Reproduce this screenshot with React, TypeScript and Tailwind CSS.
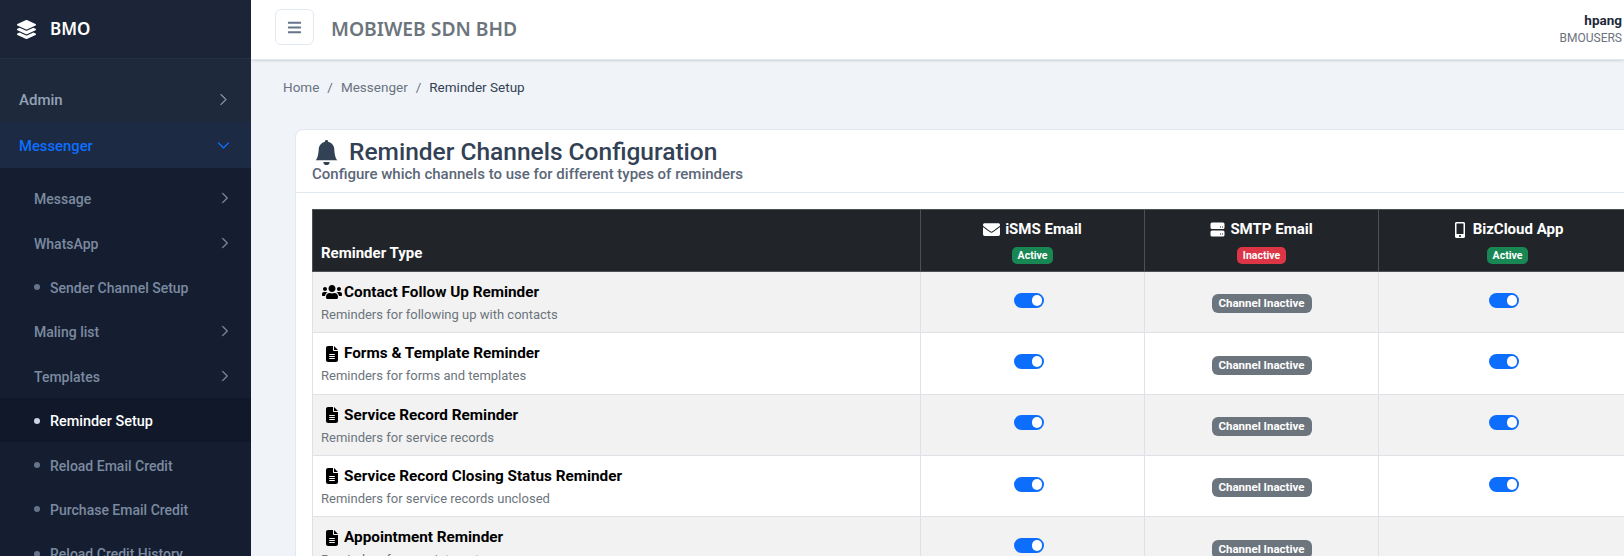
import { BsBellFill, BsChevronRight, BsChevronDown } from "react-icons/bs";
import { FaLayerGroup, FaBars, FaUsers, FaEnvelope, FaMobileAlt } from "react-icons/fa";
import { FaFileLines } from "react-icons/fa6";
import type { ReactNode } from "react";

const subItems = [
    { label: "Message", arrow: true },
    { label: "WhatsApp", arrow: true },
    { label: "Sender Channel Setup" },
    { label: "Maling list", arrow: true },
    { label: "Templates", arrow: true },
    { label: "Reminder Setup", active: true },
    { label: "Reload Email Credit" },
    { label: "Purchase Email Credit" },
    { label: "Reload Credit History" },
];

const rows = [
    { title: "Contact Follow Up Reminder", desc: "Reminders for following up with contacts", people: true, app: true },
    { title: "Forms & Template Reminder", desc: "Reminders for forms and templates", app: true },
    { title: "Service Record Reminder", desc: "Reminders for service records", app: true },
    { title: "Service Record Closing Status Reminder", desc: "Reminders for service records unclosed", app: true },
    { title: "Appointment Reminder", desc: "Reminders for appointments", app: false },
];

function ServerIcon() {
    return (
        <svg viewBox="0 0 15 15" className="w-[15px] h-[15px]" fill="currentColor">
            <path fillRule="evenodd" d="M2 0.5h11a1.5 1.5 0 0 1 1.5 1.5v3.5a1.5 1.5 0 0 1-1.5 1.5H2A1.5 1.5 0 0 1 .5 5.500V2A1.500 1.500 0 0 1 2 .5zM10 4.500v1h1v-1zM12 4.500v1h1v-1z" />
            <path fillRule="evenodd" d="M2 8.500h11a1.500 1.500 0 0 1 1.500 1.500v3a1.500 1.500 0 0 1-1.500 1.500H2A1.500 1.500 0 0 1 .5 13v-3A1.500 1.500 0 0 1 2 8.500zM10 11.500v1h1v-1zM12 11.500v1h1v-1z" />
        </svg>
    );
}

function Sidebar() {
    return (
        <aside className="w-[251px] shrink-0 h-full bg-[#1e293b] overflow-hidden">
            {/* Brand */}
            <div className="h-[59px] bg-[#1b2537] border-b border-[#243044] flex items-center pl-[17px] gap-[14px] text-white">
                <FaLayerGroup className="w-[19px] h-[19px]" />
                <span className="text-[17px] font-semibold font-['Noto_Sans',sans-serif]">BMO</span>
            </div>

            <div className="pt-[17px]">
                <div className="h-[46px] flex items-center justify-between pl-[19px] pr-[21px] pt-[3px] text-[15px] font-medium text-[#94a3b8]">
                    <span>Admin</span>
                    <BsChevronRight className="w-[13px] h-[13px] -mt-[3px] text-[#7c8aa0] stroke-1" />
                </div>
                <div className="h-[46px] flex items-center justify-between pl-[19px] pr-[21px] pt-[3px] text-[14.800px] font-medium bg-[#1c2a44] text-[#0d6efd]">
                    <span>Messenger</span>
                    <BsChevronDown className="w-[13px] h-[13px] -mt-[3px] stroke-1" />
                </div>
            </div>

            {/* Submenu */}
            <div className="bg-[#141e30] pt-[8px] h-full">
                {subItems.map((item) => (
                    <div
                        key={item.label}
                        className={`h-[44.4px] flex items-center pl-[34px] pr-[20px] pt-[3px] font-medium ${item.active ? "bg-[#10182a] text-white font-bold text-[14.400px]" : "text-[#7c8aa0] text-[14px]"}`}
                    >
                        {!item.arrow && <span className={`w-[6px] h-[6px] -mt-[2px] rounded-full mr-[10px] ${item.active ? "bg-[#cbd5e1]" : "bg-[#64748b]"}`}></span>}
                        <span className="flex-1">{item.label}</span>
                        {item.arrow && <BsChevronRight className="w-[12px] h-[12px] -mt-[3px] text-[#7c8aa0] stroke-1" />}
                    </div>
                ))}
            </div>
        </aside>
    );
}

function Toggle() {
    return (
        <div className="w-[30px] h-[15px] rounded-full bg-[#0d6efd] flex items-center justify-end pr-[2px] mx-auto -translate-x-[4px] -translate-y-[2px]">
            <span className="w-[10px] h-[11px] rounded-full bg-white"></span>
        </div>
    );
}

function ChannelInactive() {
    return <span className="inline-block h-[19px] leading-[19px] w-[100px] rounded-[6px] bg-[#6c757d] text-white text-[11.500px] font-bold text-center">Channel Inactive</span>;
}

function HeadCell({ icon, label, badge, color }: { icon: ReactNode; label: string; badge: string; color: string }) {
    return (
        <th className="border border-[#4d5154] text-center align-middle font-bold pt-[3px]">
            <div className="flex items-center justify-center gap-[5px] text-[15px] text-white">
                {icon}
                <span>{label}</span>
            </div>
            <span className={`inline-block mt-[6px] px-[6px] h-[17px] leading-[17px] rounded-[5px] text-white text-[10.500px] font-bold ${color}`}>{badge}</span>
        </th>
    );
}

export default function App() {
    return (
        <div className="w-[1624px] h-[556px] flex overflow-hidden bg-[#f0f4f8] font-['Roboto',sans-serif]">
            <Sidebar />
            <div className="flex-1 min-w-0 overflow-hidden">
                {/* Top bar */}
                <header className="h-[60px] bg-white border-b border-[#e2e8f0] shadow-sm flex items-center pl-[24px] pr-[2px]">
                    <button className="w-[39px] h-[36px] mb-[5px] border border-[#e2e8f0] rounded-[6px] flex items-center justify-center text-[#64748b]">
                        <FaBars className="w-[15px] h-[15px]" />
                    </button>
                    <h1 className="ml-[17px] text-[19.300px] font-semibold text-[#6c757d] font-['Noto_Sans',sans-serif]">MOBIWEB SDN BHD</h1>
                    <div className="ml-auto text-right leading-[18px] pb-[2px]">
                        <div className="text-[13.500px] font-bold text-[#1e293b]">hpang</div>
                        <div className="text-[12px] text-[#6b7280]">BMOUSERS</div>
                    </div>
                </header>

                {/* Breadcrumb */}
                <nav className="h-[69px] pl-[32px] pb-[14px] flex items-center gap-[8px] text-[13.500px] text-[#6b7280]">
                    <span>Home</span>
                    <span>/</span>
                    <span>Messenger</span>
                    <span>/</span>
                    <span className="text-[#334155]">Reminder Setup</span>
                </nav>

                {/* Card */}
                <section className="ml-[44px] w-[1400px] bg-white rounded-[8px] border border-[#e2e8f0]">
                    <div className="h-[63px] border-b border-[#e2e8f0] pl-[16px] pt-[7px]">
                        <h2 className="flex items-center gap-[10px] text-[24.500px] leading-[30px] font-medium text-[#334155]">
                            <BsBellFill className="w-[25px] h-[25px] ml-[2px]" />
                            Reminder Channels Configuration
                        </h2>
                        <p className="-mt-[1px] text-[15px] leading-[16px] font-medium text-[#5b6778]">Configure which channels to use for different types of reminders</p>
                    </div>
                    <div className="pt-[16px] pl-[16px]">
                        <table className="table-fixed border-collapse w-[1324px]">
                            <colgroup>
                                <col className="w-[608px]" />
                                <col className="w-[224px]" />
                                <col className="w-[234px]" />
                                <col className="w-[258px]" />
                            </colgroup>
                            <thead className="bg-[#212529]">
                                <tr className="h-[62px]">
                                    <th className="border border-[#4d5154] align-bottom text-left pl-[8px] pb-[7px] text-[15px] font-bold text-white">Reminder Type</th>
                                    <HeadCell icon={<FaEnvelope className="w-[17px] h-[17px]" />} label="iSMS Email" badge="Active" color="bg-[#198754]" />
                                    <HeadCell icon={<ServerIcon />} label="SMTP Email" badge="Inactive" color="bg-[#dc3545]" />
                                    <HeadCell icon={<FaMobileAlt className="w-[16px] h-[16px]" />} label="BizCloud App" badge="Active" color="bg-[#198754]" />
                                </tr>
                            </thead>
                            <tbody>
                                {rows.map((row, i) => (
                                    <tr key={row.title} className={`h-[61.350px] ${i % 2 === 0 ? "bg-[#f2f2f2]" : "bg-white"}`}>
                                        <td className="border border-[#dee2e6] pl-[8px] pt-[1px] align-middle">
                                            <div className="flex items-center text-[15.300px] font-bold text-black">
                                                <span className="w-[23px] pr-[2px] flex justify-center shrink-0">
                                                    {row.people ? <FaUsers className="w-[20px] h-[20px]" /> : <FaFileLines className="w-[12px] h-[16px]" />}
                                                </span>
                                                {row.title}
                                            </div>
                                            <div className="mt-[1px] text-[13px] text-[#6c757d]">{row.desc}</div>
                                        </td>
                                        <td className="border border-[#dee2e6] align-middle"><Toggle /></td>
                                        <td className="border border-[#dee2e6] align-middle text-center"><ChannelInactive /></td>
                                        <td className="border border-[#dee2e6] align-middle">{row.app && <Toggle />}</td>
                                    </tr>
                                ))}
                            </tbody>
                        </table>
                    </div>
                </section>
            </div>
        </div>
    );
}
